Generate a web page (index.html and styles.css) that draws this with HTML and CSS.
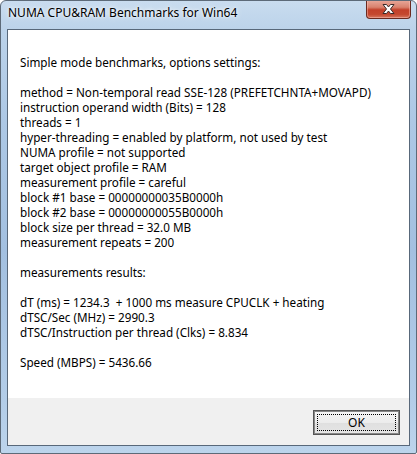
FILE: index.html
```html
<!DOCTYPE html>
<html>
<head>
<meta charset="utf-8">
<link rel="stylesheet" href="styles.css">
</head>
<body>
<div class="window">
  <div class="titlebar">
    <span class="title">NUMA CPU&amp;RAM Benchmarks for Win64</span>
    <div class="close">
      <svg width="19" height="12" viewBox="0 0 19 12">
        <path d="M4 1.5 L7.5 1.5 L9.5 4 L11.5 1.5 L15 1.5 L11.5 6 L15 10.5 L11.5 10.5 L9.5 8 L7.5 10.5 L4 10.5 L7.5 6 Z" fill="#fff" stroke="#3a2a28" stroke-width="1" stroke-linejoin="round"/>
      </svg>
    </div>
  </div>
  <div class="client">
    <div class="content">
      <div class="line">Simple mode benchmarks, options settings:</div>
      <div class="line blank"></div>
      <div class="line">method = Non-temporal read SSE-128 (PREFETCHNTA+MOVAPD)</div>
      <div class="line">instruction operand width (Bits) = 128</div>
      <div class="line">threads = 1</div>
      <div class="line">hyper-threading = enabled by platform, not used by test</div>
      <div class="line">NUMA profile = not supported</div>
      <div class="line">target object profile = RAM</div>
      <div class="line">measurement profile = careful</div>
      <div class="line">block #1 base = 00000000035B0000h</div>
      <div class="line">block #2 base = 00000000055B0000h</div>
      <div class="line">block size per thread = 32.0 MB</div>
      <div class="line">measurement repeats = 200</div>
      <div class="line blank"></div>
      <div class="line">measurements results:</div>
      <div class="line blank"></div>
      <div class="line">dT (ms) = 1234.3&nbsp; + 1000 ms measure CPUCLK + heating</div>
      <div class="line">dTSC/Sec (MHz) = 2990.3</div>
      <div class="line">dTSC/Instruction per thread (Clks) = 8.834</div>
      <div class="line blank"></div>
      <div class="line">Speed (MBPS) = 5436.66</div>
    </div>
    <div class="footer">
      <button class="ok"><span class="focus">OK</span></button>
    </div>
  </div>
</div>
</body>
</html>
```

FILE: styles.css
```css
html, body {
  margin: 0;
  padding: 0;
  background: #ffffff;
}

.window {
  width: 417px;
  height: 454px;
  box-sizing: border-box;
  border: 1px solid #5d6a78;
  border-radius: 6px 6px 2px 2px;
  background: linear-gradient(180deg, #c9dcef 0px, #bcd3ea 28px, #adc8e5 120px, #a3c0e0 250px, #b3cde8 400px, #bcd4ec 452px);
  display: flex;
  flex-direction: column;
  font-family: "Noto Sans", "DejaVu Sans", sans-serif;
  overflow: hidden;
}

.titlebar {
  height: 28px;
  flex: none;
  display: flex;
  align-items: flex-start;
  position: relative;
}

.title {
  margin: 4px 0 0 7px;
  font-size: 12px;
  line-height: 16px;
  color: #000;
  text-shadow: 0 0 6px rgba(255,255,255,0.9), 0 0 3px rgba(255,255,255,0.9);
}

.close {
  position: absolute;
  top: -1px;
  right: 5px;
  width: 45px;
  height: 19px;
  box-sizing: border-box;
  border: 1px solid #6a2a20;
  border-top: none;
  border-radius: 0 0 4px 4px;
  background: linear-gradient(180deg, #e9aa9c 0%, #d9826e 40%, #c2402a 55%, #c4482f 80%, #d6775f 100%);
  box-shadow: inset 0 0 0 1px rgba(255,200,190,0.45);
  display: flex;
  align-items: center;
  justify-content: center;
}

.client {
  flex: 1;
  margin: 0 6px 7px 6px;
  border: 1px solid #58687a;
  display: flex;
  flex-direction: column;
  background: #ffffff;
}

.content {
  flex: 1;
  background: #ffffff;
  padding: 25px 0 0 12px;
  font-size: 11.7px;
  line-height: 15px;
  color: #000;
}

.line {
  height: 15px;
  white-space: nowrap;
}

.footer {
  height: 47px;
  flex: none;
  background: #f0f0f0;
  display: flex;
  justify-content: flex-end;
  align-items: flex-start;
  padding: 12px 9px 0 0;
  box-sizing: border-box;
}

.ok {
  width: 87px;
  height: 25px;
  box-sizing: border-box;
  border: 1px solid #555;
  outline: 1px solid #888;
  outline-offset: -2px;
  background: linear-gradient(180deg, #f6f6f6 0%, #ececec 50%, #dfdfdf 51%, #e6e6e6 100%);
  padding: 3px;
  margin: 0;
  display: flex;
  font-family: "Noto Sans", "DejaVu Sans", sans-serif;
  font-size: 12px;
  color: #000;
}

.focus {
  flex: 1;
  border: 1px dotted #000;
  display: flex;
  align-items: center;
  justify-content: center;
  line-height: 14px;
}
```
